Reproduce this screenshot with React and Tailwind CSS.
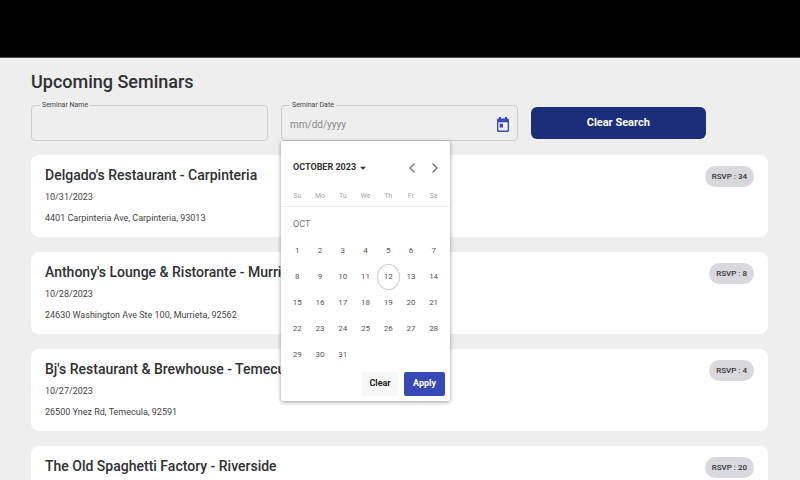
import React, { useState } from 'react';
import { ChevronLeft, ChevronRight } from 'lucide-react';
import { MdArrowDropDown } from 'react-icons/md';

const seminars = [
  { id: 1, name: "Delgado's Restaurant - Carpinteria", date: '10/31/2023', address: '4401 Carpinteria Ave, Carpinteria, 93013', rsvp: 34 },
  { id: 2, name: "Anthony's Lounge & Ristorante - Murrieta", date: '10/28/2023', address: '24630 Washington Ave Ste 100, Murrieta, 92562', rsvp: 8 },
  { id: 3, name: "Bj's Restaurant & Brewhouse - Temecula", date: '10/27/2023', address: '26500 Ynez Rd, Temecula, 92591', rsvp: 4 },
  { id: 4, name: 'The Old Spaghetti Factory - Riverside', rsvp: 20 },
];

const weekdays = ['Su', 'Mo', 'Tu', 'We', 'Th', 'Fr', 'Sa'];
const days = Array.from({ length: 31 }, (_, i) => i + 1);
const today = 12;

function CalendarIcon() {
  return (
    <svg viewBox="3 1 18 20" className="w-3 h-[15px]" fill="currentColor" preserveAspectRatio="none">
      <path d="M19 3h-1V1h-3v2H9V1H6v2H5c-1.100 0-2 .9-2 2v14c0 1.100.9 2 2 2h14c1.100 0 2-.9 2-2V5c0-1.100-.9-2-2-2zm0 16H5V8h14v11zM7 10h5v5H7z" />
    </svg>
  );
}

function Field({ id, label, children }) {
  return (
    <fieldset className="h-10 min-w-0 border border-[#cdcdcd] rounded px-2 flex items-center">
      <legend className="px-0.5 text-[7px] leading-[8px] text-[#444]">
        <label htmlFor={id} className="block">{label}</label>
      </legend>
      {children}
    </fieldset>
  );
}

function DatePicker({ onSelect, onClose }) {
  return (
    <div className="absolute left-0 top-10 z-10 w-[169px] h-[260px] bg-white rounded-xs shadow-[0_1px_4px_rgba(0,0,0,0.4)] flex flex-col">
      <div className="h-[46px] pt-2 pl-3 pr-[7px] flex items-center justify-between">
        <button className="flex items-center text-[9px] font-bold text-[#333] cursor-pointer">
          OCTOBER 2023
          <MdArrowDropDown className="w-3.5 h-3.5" />
        </button>
        <div className="flex gap-[7px] text-[#777]">
          <button aria-label="Previous month" className="cursor-pointer">
            <ChevronLeft className="w-4 h-4" />
          </button>
          <button aria-label="Next month" className="cursor-pointer">
            <ChevronRight className="w-4 h-4" />
          </button>
        </div>
      </div>
      <div className="h-5 pb-0.5 px-[5px] grid grid-cols-7 items-center text-center text-[7px] leading-[8px] text-[#a5a5a5] border-b border-[#ececec]">
        {weekdays.map((d) => (
          <span key={d}>{d}</span>
        ))}
      </div>
      <div className="px-[5px] pt-[5px] grid grid-cols-7 auto-rows-[26px] items-center text-center text-[8px] text-[#555]">
        <span className="col-span-7 pl-[7px] text-left text-[9px] text-[#777]">OCT</span>
        {days.map((day) => (
          <button
            key={day}
            onClick={() => onSelect(day)}
            className={`h-[26px] cursor-pointer ${day === today ? 'rounded-[50%] border border-[#ccc]' : ''}`}
          >
            {day}
          </button>
        ))}
      </div>
      <div className="mt-auto pb-[5px] pr-[5px] flex justify-end gap-1.5 text-[9px] font-bold">
        <button onClick={onClose} className="w-9 h-6 rounded-xs bg-[#f8f8f8] text-[#222] cursor-pointer">
          Clear
        </button>
        <button onClick={onClose} className="w-[41px] h-6 rounded-xs bg-[#3848b5] text-white cursor-pointer">
          Apply
        </button>
      </div>
    </div>
  );
}

function SeminarCard({ seminar }) {
  return (
    <li className="bg-white rounded-lg h-[82px] px-3.5 pt-[11px] flex items-start justify-between">
      <div>
        <h2 className="text-[14px] leading-[18px] font-medium text-[#2e3033]">{seminar.name}</h2>
        {seminar.date && <p className="mt-1 text-[9px] leading-[18px] text-[#444]">{seminar.date}</p>}
        {seminar.address && <p className="mt-[3px] text-[9px] leading-[18px] text-[#444]">{seminar.address}</p>}
      </div>
      <span className="h-[21px] px-[7px] rounded-full bg-[#d8d8de] text-[8px] leading-[21px] font-medium text-[#333]">
        RSVP : {seminar.rsvp}
      </span>
    </li>
  );
}

export default function App() {
  const [name, setName] = useState('');
  const [date, setDate] = useState('');
  const [open, setOpen] = useState(true);

  const clearSearch = () => {
    setName('');
    setDate('');
  };

  return (
    <div className="h-screen overflow-hidden bg-[#eeeeee] font-['Roboto',sans-serif]">
      <header className="h-[58px] bg-black border-b border-[#555]" />
      <main className="pl-[31px] pr-8 pt-3">
        <h1 className="text-[18px] leading-6 font-medium text-[#2e3033]">Upcoming Seminars</h1>

        <div className="mt-[7px] grid grid-cols-12 gap-[13px]">
          <div className="col-span-4">
            <Field id="seminar-name" label="Seminar Name">
              <input
                id="seminar-name"
                type="text"
                value={name}
                onChange={(e) => setName(e.target.value)}
                className="w-full bg-transparent text-[10px] outline-none"
              />
            </Field>
          </div>
          <div className="col-span-4 relative">
            <Field id="seminar-date" label="Seminar Date">
              <div className="w-full flex items-center">
                <input
                  id="seminar-date"
                  type="text"
                  placeholder="mm/dd/yyyy"
                  value={date}
                  onChange={(e) => setDate(e.target.value)}
                  className="flex-1 min-w-0 bg-transparent text-[10px] outline-none placeholder:text-[#888]"
                />
                <button
                  aria-label="Choose date"
                  onClick={() => setOpen(!open)}
                  className="text-[#3848b5] cursor-pointer"
                >
                  <CalendarIcon />
                </button>
              </div>
            </Field>
            {open && (
              <DatePicker
                onSelect={(day) => setDate(`10/${String(day).padStart(2, '0')}/2023`)}
                onClose={() => setOpen(false)}
              />
            )}
          </div>
          <button
            onClick={clearSearch}
            className="col-span-3 mt-1.5 h-8 rounded-md bg-[#1c2d7a] text-white text-[11px] font-bold cursor-pointer"
          >
            Clear Search
          </button>
        </div>

        <ul className="mt-3.5 flex flex-col gap-[15px]">
          {seminars.map((seminar) => (
            <SeminarCard key={seminar.id} seminar={seminar} />
          ))}
        </ul>
      </main>
    </div>
  );
}
